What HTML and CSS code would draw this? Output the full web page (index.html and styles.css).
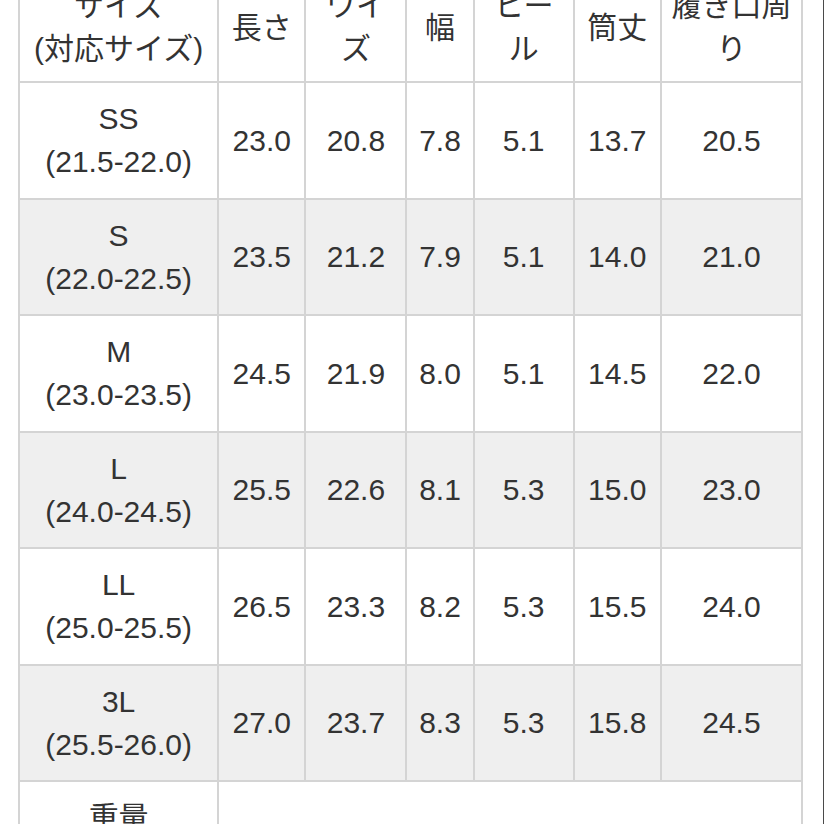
FILE: index.html
```html
<!DOCTYPE html>
<html lang="ja">
<head>
<meta charset="utf-8">
<link rel="stylesheet" href="styles.css">
</head>
<body>
<div class="page">
  <table class="size-table">
    <colgroup>
      <col class="c1"><col class="c2"><col class="c3"><col class="c4"><col class="c5"><col class="c6"><col class="c7">
    </colgroup>
    <thead>
      <tr class="head">
        <th>サイズ<br>(対応サイズ)</th>
        <th>長さ</th>
        <th>ワイズ</th>
        <th>幅</th>
        <th>ヒール</th>
        <th>筒丈</th>
        <th>履き口周り</th>
      </tr>
    </thead>
    <tbody>
      <tr><td>SS<br>(21.5-22.0)</td><td>23.0</td><td>20.8</td><td>7.8</td><td>5.1</td><td>13.7</td><td>20.5</td></tr>
      <tr class="alt"><td>S<br>(22.0-22.5)</td><td>23.5</td><td>21.2</td><td>7.9</td><td>5.1</td><td>14.0</td><td>21.0</td></tr>
      <tr><td>M<br>(23.0-23.5)</td><td>24.5</td><td>21.9</td><td>8.0</td><td>5.1</td><td>14.5</td><td>22.0</td></tr>
      <tr class="alt"><td>L<br>(24.0-24.5)</td><td>25.5</td><td>22.6</td><td>8.1</td><td>5.3</td><td>15.0</td><td>23.0</td></tr>
      <tr><td>LL<br>(25.0-25.5)</td><td>26.5</td><td>23.3</td><td>8.2</td><td>5.3</td><td>15.5</td><td>24.0</td></tr>
      <tr class="alt"><td>3L<br>(25.5-26.0)</td><td>27.0</td><td>23.7</td><td>8.3</td><td>5.3</td><td>15.8</td><td>24.5</td></tr>
      <tr><td>重量<br>(片足)</td><td colspan="6"></td></tr>
    </tbody>
  </table>
</div>
</body>
</html>
```

FILE: styles.css
```css
html, body {
  margin: 0;
  padding: 0;
  background: #ffffff;
}
body {
  width: 824px;
  height: 824px;
  overflow: hidden;
  box-sizing: border-box;
  border-right: 1px solid #4a4a4a;
}
.page {
  padding-left: 18px;
  margin-top: -29px;
}
.size-table {
  border-collapse: collapse;
  table-layout: fixed;
  width: 785px;
  font-family: "Liberation Sans", "Noto Sans CJK JP", sans-serif;
  font-size: 30px;
  line-height: 43px;
  color: #333333;
}
.c1 { width: 199px; }
.c2 { width: 87px; }
.c3 { width: 101px; }
.c4 { width: 67px; }
.c5 { width: 100px; }
.c6 { width: 87px; }
.c7 { width: 141px; }
.size-table th,
.size-table td {
  border: 2px solid #d4d4d4;
  text-align: center;
  vertical-align: middle;
  padding: 14.25px 8px;
  font-weight: normal;
}
.size-table .head th {
  padding: 11px 8px;
}
.size-table .alt td {
  background: #efefef;
}
```
